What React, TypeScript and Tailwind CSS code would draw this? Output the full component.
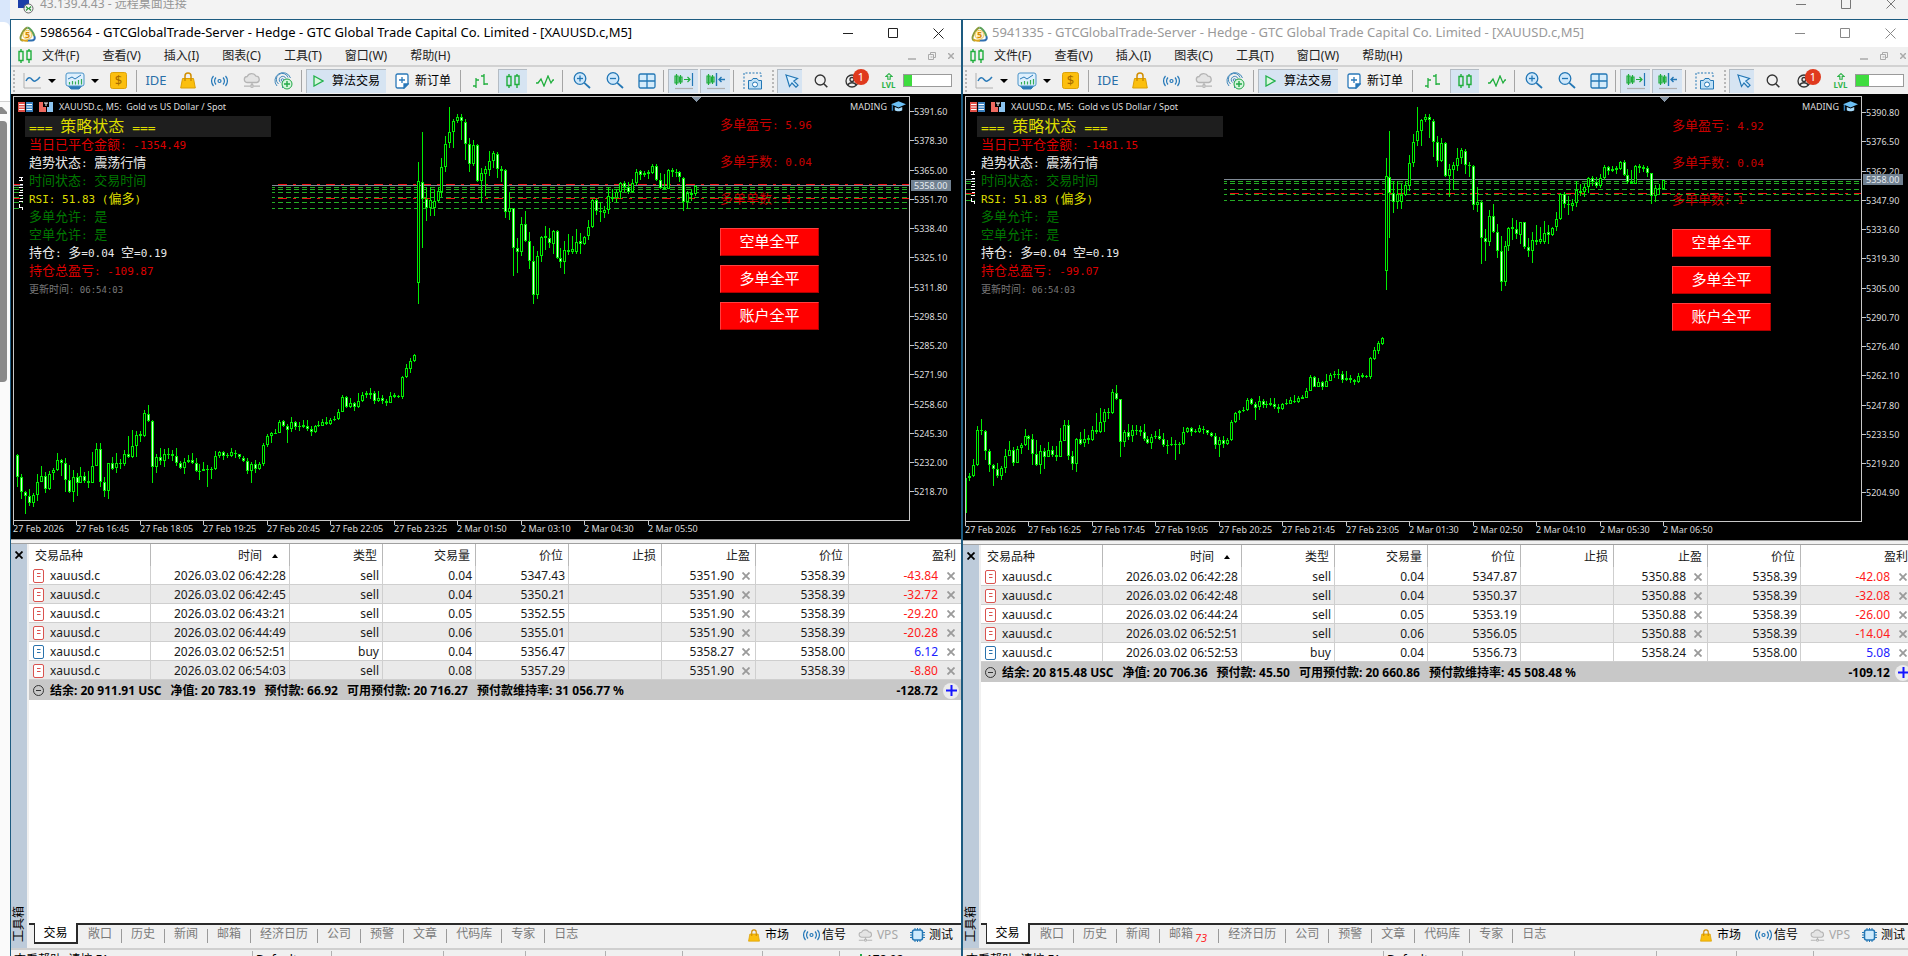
import React from 'react';

type Candle = [number, number, number, number, number];

// high, body top, body bottom, low, rising (1) or falling (0)
const friday: Candle[] = [
  [618, 618, 729, 729, 1], [600, 610, 618, 626, 1], [557, 575, 610, 613, 1], [450, 462, 575, 579, 1],
  [427, 462, 466, 479, 1], [463, 465, 530, 560, 0], [522, 530, 575, 598, 0], [573, 575, 587, 643, 0],
  [568, 587, 610, 618, 0], [578, 585, 610, 622, 1], [523, 545, 585, 602, 1], [497, 527, 545, 545, 1],
  [517, 527, 568, 578, 0], [513, 522, 568, 570, 1], [505, 510, 520, 540, 1], [458, 480, 510, 513, 1],
  [477, 480, 490, 527, 0], [475, 490, 541, 575, 0], [495, 541, 575, 578, 0], [510, 530, 575, 605, 1],
  [520, 530, 548, 588, 0], [502, 528, 548, 550, 1], [515, 528, 543, 548, 0], [513, 543, 548, 563, 0],
  [455, 497, 548, 550, 1], [430, 447, 497, 497, 1], [430, 447, 545, 560, 0], [530, 545, 572, 590, 0],
  [488, 490, 572, 597, 1], [470, 490, 507, 510, 0], [458, 490, 505, 518, 1], [477, 489, 493, 508, 1],
  [450, 462, 493, 498, 1], [408, 462, 470, 475, 0], [390, 437, 470, 473, 1], [393, 405, 437, 470, 1],
  [392, 403, 408, 425, 1], [330, 340, 407, 410, 1], [316, 343, 363, 365, 0], [361, 363, 500, 550, 0],
  [463, 470, 500, 518, 1], [443, 470, 483, 495, 0], [447, 462, 482, 500, 1], [445, 462, 465, 478, 1],
  [450, 462, 468, 482, 0], [443, 468, 490, 497, 0], [482, 490, 505, 508, 0], [475, 485, 505, 523, 1],
  [465, 480, 486, 490, 1], [458, 480, 490, 493, 0], [473, 490, 512, 517, 0], [493, 512, 515, 540, 0],
  [485, 508, 512, 513, 1], [495, 508, 510, 560, 0], [500, 508, 510, 538, 1], [453, 467, 508, 510, 1],
  [453, 457, 467, 473, 1], [453, 457, 467, 480, 0], [460, 465, 467, 473, 1], [445, 457, 467, 472, 1],
  [450, 460, 463, 475, 0], [461, 463, 472, 477, 0], [468, 473, 482, 485, 0], [473, 482, 512, 522, 0],
  [485, 493, 512, 548, 1], [480, 493, 508, 520, 0], [487, 493, 508, 510, 1], [430, 435, 493, 497, 1],
  [403, 407, 435, 440, 1], [397, 400, 407, 430, 1], [388, 398, 401, 403, 1], [360, 365, 398, 400, 1],
  [360, 363, 377, 380, 0], [373, 377, 390, 430, 0], [352, 367, 388, 397, 1], [363, 367, 380, 390, 0],
  [367, 378, 382, 392, 0], [360, 375, 380, 383, 1], [360, 377, 388, 393, 0], [378, 388, 395, 407, 0],
  [375, 378, 395, 398, 1], [363, 375, 378, 380, 1], [357, 365, 377, 378, 1], [350, 367, 373, 375, 0],
  [353, 360, 373, 375, 1], [348, 357, 361, 363, 1], [328, 335, 358, 360, 1], [286, 292, 335, 337, 1],
  [288, 292, 322, 323, 0], [295, 308, 322, 323, 1], [305, 308, 322, 333, 0], [280, 303, 322, 323, 1],
  [277, 285, 303, 305, 1], [273, 280, 285, 293, 1], [265, 280, 285, 298, 1], [273, 280, 302, 312, 0],
  [273, 295, 302, 305, 1], [285, 295, 302, 312, 0], [298, 302, 308, 318, 0], [277, 288, 308, 310, 1],
  [278, 286, 290, 293, 1], [285, 287, 291, 295, 0], [228, 230, 290, 298, 1], [193, 205, 232, 235, 1],
  [175, 182, 208, 218, 1], [162, 165, 183, 187, 1],
];

const monday: Candle[] = [
  [485, 543, 848, 912, 1], [397, 547, 598, 743, 0], [560, 598, 625, 663, 0], [560, 600, 625, 648, 1],
  [570, 603, 625, 648, 1], [560, 572, 603, 607, 1], [475, 500, 575, 590, 1], [408, 432, 500, 515, 1],
  [320, 397, 430, 445, 1], [358, 362, 397, 445, 1], [343, 352, 362, 370, 1], [343, 352, 362, 420, 0],
  [358, 365, 433, 480, 0], [415, 433, 493, 515, 0], [420, 435, 493, 497, 1], [433, 435, 543, 545, 0],
  [505, 520, 543, 610, 1], [498, 508, 522, 587, 1], [453, 483, 510, 527, 1], [452, 460, 483, 505, 1],
  [457, 462, 507, 535, 0], [497, 507, 512, 547, 0], [507, 510, 635, 653, 0], [577, 625, 635, 660, 1],
  [623, 625, 743, 827, 0], [713, 743, 757, 818, 0], [652, 672, 757, 767, 1], [632, 672, 722, 727, 0],
  [697, 722, 783, 808, 0], [737, 783, 885, 913, 0], [753, 767, 885, 897, 1], [707, 710, 767, 785, 1],
  [678, 707, 715, 750, 0], [683, 713, 730, 745, 0], [690, 692, 732, 763, 1], [690, 692, 773, 777, 0],
  [743, 773, 785, 803, 0], [723, 750, 785, 823, 1], [702, 750, 757, 765, 0], [707, 747, 755, 762, 1],
  [687, 725, 757, 762, 1], [700, 722, 732, 763, 0], [708, 710, 732, 735, 1], [660, 682, 708, 720, 1],
  [597, 600, 682, 685, 1], [593, 600, 632, 645, 0], [607, 632, 637, 667, 0], [617, 630, 640, 655, 1],
  [560, 587, 630, 643, 1], [567, 590, 597, 607, 0], [567, 577, 595, 610, 1], [547, 550, 577, 597, 1],
  [543, 550, 562, 575, 0], [547, 562, 575, 582, 0], [537, 550, 575, 580, 1], [508, 515, 550, 555, 1],
  [510, 513, 525, 540, 0], [512, 520, 525, 530, 1], [510, 517, 522, 537, 1], [493, 497, 520, 523, 1],
  [492, 497, 540, 543, 0], [520, 540, 563, 567, 0], [523, 563, 568, 570, 0], [507, 510, 567, 568, 1],
  [503, 510, 517, 532, 0], [507, 515, 520, 530, 0], [512, 517, 532, 545, 0], [532, 533, 607, 633, 0],
  [573, 580, 607, 627, 1], [567, 580, 585, 603, 0], [556, 557, 583, 588, 1],
];

// both sessions on one vertical axis, in chart pixels below the plot's top
const candles = [
  ...friday.map(([h, t, b, l, up]) => ({ h: h + 900, t: t + 900, b: b + 900, l: l + 900, up })),
  ...monday.map(([h, t, b, l, up]) => ({ h, t, b, l, up })),
].map((c) => ({ h: c.h / 3 - 97, t: c.t / 3 - 97, b: c.b / 3 - 97, l: c.l / 3 - 97, up: c.up === 1 }));

interface Terminal {
  account: string;
  active: boolean;
  skip: number;
  zoom: number;
  chartHeight: string;
  marker: number;
  bid: number;
  green: number[];
  red: number[];
  firstPrice: number;
  firstY: number;
  step: number;
  times: string[];
  closed: string;
  floating: string;
  longProfit: string;
  rows: string[][];
  summary: string[];
  total: string;
  mail: string;
  progress: string;
  statusCols: string[];
}

const terminals: Terminal[] = [
  {
    account: '5986564',
    active: true,
    skip: 5,
    zoom: 1,
    chartHeight: 'h-[445px]',
    marker: 682,
    bid: 88,
    green: [90, 92, 95, 100, 105, 111],
    red: [87, 101],
    firstPrice: 5391.6,
    firstY: 17,
    step: 13.3,
    times: ['27 Feb 2026', '27 Feb 16:45', '27 Feb 18:05', '27 Feb 19:25', '27 Feb 20:45', '27 Feb 22:05', '27 Feb 23:25', '2 Mar 01:50', '2 Mar 03:10', '2 Mar 04:30', '2 Mar 05:50'],
    closed: '-1354.49',
    floating: '-109.87',
    longProfit: '5.96',
    rows: [
      ['2026.03.02 06:42:28', 'sell', '0.04', '5347.43', '5351.90', '5358.39', '-43.84'],
      ['2026.03.02 06:42:45', 'sell', '0.04', '5350.21', '5351.90', '5358.39', '-32.72'],
      ['2026.03.02 06:43:21', 'sell', '0.05', '5352.55', '5351.90', '5358.39', '-29.20'],
      ['2026.03.02 06:44:49', 'sell', '0.06', '5355.01', '5351.90', '5358.39', '-20.28'],
      ['2026.03.02 06:52:51', 'buy', '0.04', '5356.47', '5358.27', '5358.00', '6.12'],
      ['2026.03.02 06:54:03', 'sell', '0.08', '5357.29', '5351.90', '5358.39', '-8.80'],
    ],
    summary: ['结余: 20 911.91 USC', '净值: 20 783.19', '预付款: 66.92', '可用预付款: 20 716.27', '预付款维持率: 31 056.77 %'],
    total: '-128.72',
    mail: '',
    progress: 'w-[18%]',
    statusCols: ['w-[242px]', 'w-[79px]', 'w-[112px]', 'w-[82px]', 'w-[80px]', 'w-[77px]', 'w-[80px]', 'w-[77px]'],
  },
  {
    account: '5941335',
    active: false,
    skip: 0,
    zoom: 0.93,
    chartHeight: 'h-[446px]',
    marker: 698,
    bid: 82,
    green: [84, 86, 92, 97, 103],
    red: [96],
    firstPrice: 5390.8,
    firstY: 18,
    step: 14.3,
    times: ['27 Feb 2026', '27 Feb 16:25', '27 Feb 17:45', '27 Feb 19:05', '27 Feb 20:25', '27 Feb 21:45', '27 Feb 23:05', '2 Mar 01:30', '2 Mar 02:50', '2 Mar 04:10', '2 Mar 05:30', '2 Mar 06:50'],
    closed: '-1481.15',
    floating: '-99.07',
    longProfit: '4.92',
    rows: [
      ['2026.03.02 06:42:28', 'sell', '0.04', '5347.87', '5350.88', '5358.39', '-42.08'],
      ['2026.03.02 06:42:48', 'sell', '0.04', '5350.37', '5350.88', '5358.39', '-32.08'],
      ['2026.03.02 06:44:24', 'sell', '0.05', '5353.19', '5350.88', '5358.39', '-26.00'],
      ['2026.03.02 06:52:51', 'sell', '0.06', '5356.05', '5350.88', '5358.39', '-14.04'],
      ['2026.03.02 06:52:53', 'buy', '0.04', '5356.73', '5358.24', '5358.00', '5.08'],
    ],
    summary: ['结余: 20 815.48 USC', '净值: 20 706.36', '预付款: 45.50', '可用预付款: 20 660.86', '预付款维持率: 45 508.48 %'],
    total: '-109.12',
    mail: '73',
    progress: 'w-[28%]',
    statusCols: ['w-[421px]', 'w-[79px]', 'w-[112px]', 'w-[82px]', 'w-[80px]', 'w-[77px]'],
  },
];

const menus = ['文件(F)', '查看(V)', '插入(I)', '图表(C)', '工具(T)', '窗口(W)', '帮助(H)'];
const tabs = ['交易', '敞口', '历史', '新闻', '邮箱', '经济日历', '公司', '预警', '文章', '代码库', '专家', '日志'];

function Logo() {
  return (
    <svg width="17" height="16" viewBox="0 0 17 16" fill="none" strokeWidth="2">
      <path d="M8.5 1.5C6 2.5 3 7 1.7 10.5C1 13 2 14.5 4 14.5" stroke="#8a9a3a" />
      <path d="M8.5 1.5C11 2 14 6 15.3 10" stroke="#5aa05a" />
      <path d="M15.3 10C16.5 13 15 14.5 12.5 14.5H8" stroke="#2f6fb0" />
      <path d="M2.5 13.5C4 15 6 14.6 9 14.6" stroke="#d9a520" />
      <circle cx="8.5" cy="8.8" r="4.5" fill="#fff4cf" stroke="#e8c050" strokeWidth="1" />
      <text x="8.5" y="12.3" textAnchor="middle" fontSize="9" fontWeight="bold" fill="#d98a00">5</text>
    </svg>
  );
}

function CandlePair() {
  return (
    <svg width="14" height="16" viewBox="0 0 14 16" fill="none" stroke="#1fae3c" strokeWidth="1.4">
      <path d="M3 1v2.5M3 12.5V15M1 3.5h4v9H1zM11 1v2M11 11.5V15M9 3h4v8.5H9z" />
    </svg>
  );
}

function Signal() {
  return (
    <svg width="17" height="12" viewBox="0 0 17 12" fill="none" stroke="#2277b8" strokeWidth="1.2">
      <circle cx="8.5" cy="6" r="1.5" />
      <path d="M5 2.5a5 5 0 0 0 0 7M12 2.5a5 5 0 0 1 0 7M2.5 1a7.500 7.500 0 0 0 0 10M14.500 1a7.500 7.500 0 0 1 0 10" />
    </svg>
  );
}

function Bag({ small }: { small?: boolean }) {
  return (
    <svg width={small ? 12 : 16} height={small ? 13 : 17} viewBox="0 0 16 17" fill="none">
      <path d="M2.5 6.5h11L15.3 16H.7z" fill="#fbbf0e" stroke="#dba007" />
      <path d="M5 9V4a3 3 0 0 1 6 0v5" stroke="#d08d00" strokeWidth="1.5" />
    </svg>
  );
}

function Cloud({ small }: { small?: boolean }) {
  return (
    <svg width={small ? 15 : 18} height={small ? 13 : 15} viewBox="0 0 18 15" fill="none" stroke="#b5b5b5" strokeWidth="1.3">
      <path d="M4.5 9.5a3 3 0 0 1-.3-6A5 5 0 0 1 13 3.2a3.2 3.2 0 0 1 .8 6.3z" fill="#e4e4e4" />
      <path d="M9 9.5v3M1 13.2h6M11 13.2h6" />
      <circle cx="9" cy="13" r="1.3" />
    </svg>
  );
}

function Magnifier({ plus }: { plus: boolean }) {
  return (
    <svg width="18" height="17" viewBox="0 0 18 17" fill="none" stroke="#2377b5" strokeWidth="1.3">
      <circle cx="7" cy="6.5" r="5.8" fill="#cfe8fb" />
      <path d="M4 6.5h6" />
      {plus && <path d="M7 3.5v6" />}
      <path d="M11.3 10.8L17 16" strokeWidth="1.8" />
    </svg>
  );
}

function Caret() {
  return (
    <svg width="8" height="4" viewBox="0 0 8 4">
      <path d="M0 0h8L4 4z" fill="#000" />
    </svg>
  );
}

function Cross({ className }: { className: string }) {
  return (
    <svg width="8" height="8" viewBox="0 0 8 8" fill="none" stroke="currentColor" className={className}>
      <path d="M.5.5l7 7M7.5.5l-7 7" strokeWidth="1.8" />
    </svg>
  );
}

function Separator() {
  return <span className="mr-px h-[22px] w-px bg-[#a5a5a5]" />;
}

function Grip() {
  return <span className="h-[22px] border-l-2 border-dotted border-[#b8b8b8]" />;
}

interface ToolProps {
  label: string;
  className: string;
  pressed?: boolean;
  children: React.ReactNode;
}

function Tool({ label, className, pressed, children }: ToolProps) {
  return (
    <button
      type="button"
      aria-label={label}
      className={`flex h-6 shrink-0 items-center justify-center ${pressed ? 'border-l border-t border-[#b4bcc4] bg-[#d6e4f2]' : ''} ${className}`}
    >
      {children}
    </button>
  );
}

function Toolbar({ t }: { t: Terminal }) {
  return (
    <div className="flex h-[27px] items-center bg-[#f0f0f0] pl-0.5">
      <Grip />
      <Tool label="线形图" className="ml-[3px] w-[41px] gap-1.5">
        <svg width="20" height="18" viewBox="0 0 20 18" fill="none">
          <path d="M2 1v15h17" stroke="#b0b0b0" />
          <path d="M4 9c2-4 4-4 6-1.5s4 2.5 8-2.5" stroke="#2a7ab8" strokeWidth="1.5" />
        </svg>
        <Caret />
      </Tool>
      <Tool label="指标" className="ml-0.5 w-[41px] gap-1.5">
        <svg width="20" height="18" viewBox="0 0 20 18" fill="none">
          <path d="M3 13.5l3 3.5h8l3-3.5" fill="#2a7ab8" stroke="#2a7ab8" />
          <rect x="1" y="1" width="18" height="13" rx="2" fill="#dff0fd" stroke="#4a93c8" />
          <path d="M3 7l4-2 3 2 6-4" stroke="#2a7ab8" />
          <path d="M4.5 12.5V10M7.5 12.5V9M10.5 12.5v-3M13.5 12.5V8M16.5 12.5V7" stroke="#35ae56" strokeWidth="1.2" />
        </svg>
        <Caret />
      </Tool>
      <Tool label="报价" className="w-8">
        <svg width="17" height="17" viewBox="0 0 17 17">
          <rect x=".5" y=".5" width="16" height="16" rx="2" fill="#fcbf10" stroke="#dda208" />
          <text x="8.5" y="13" textAnchor="middle" fontSize="13" fill="#a86c00">$</text>
        </svg>
      </Tool>
      <span className="mr-px ml-0.5 h-[22px] w-px bg-[#a5a5a5]" />
      <Tool label="MetaEditor" className="w-9 text-[13px] text-[#2a6fa8]">IDE</Tool>
      <Tool label="市场" className="w-7"><Bag /></Tool>
      <Tool label="信号" className="w-[35px]"><Signal /></Tool>
      <Tool label="VPS" className="w-[29px]"><Cloud /></Tool>
      <Tool label="社区" className="w-[35px]">
        <svg width="19" height="18" viewBox="0 0 19 18" fill="none" stroke="#4389bb">
          <path d="M3 14A8 8 0 1 1 16.5 6" />
          <path d="M4.5 12A6 6 0 1 1 14 5.5" />
          <path d="M6.5 10.5A3.5 3.5 0 1 1 12 6.5" />
          <circle cx="8.5" cy="8" r="1.3" />
          <path d="M8.5 9v7" />
          <circle cx="13" cy="12" r="5" fill="#d5f5dc" stroke="#22a847" />
          <path d="M10 12h6M13 9v6" stroke="#22a847" strokeWidth="1.4" />
        </svg>
      </Tool>
      <Separator />
      <Tool label="算法交易" pressed className="ml-[3px] w-20 gap-2 text-xs">
        <svg width="11" height="12" viewBox="0 0 11 12" fill="#d8f8de" stroke="#22b14c" strokeWidth="1.3">
          <path d="M1 1l9 5-9 5z" />
        </svg>
        算法交易
      </Tool>
      <Tool label="新订单" className="w-[74px] gap-1.5 text-xs">
        <svg width="14" height="16" viewBox="0 0 14 16" fill="#fff" stroke="#2a78b8" strokeWidth="1.3">
          <path d="M2.5 1h9A1.5 1.5 0 0 1 13 2.5V11l-4 4H2.5A1.5 1.5 0 0 1 1 13.5v-11A1.5 1.5 0 0 1 2.5 1z" />
          <path d="M13 11H9v4z" fill="#2a78b8" />
          <path d="M7 4v6M4 7h6" />
        </svg>
        新订单
      </Tool>
      <Separator />
      <Tool label="柱形图" className="w-9">
        <svg width="17" height="16" viewBox="0 0 17 16" fill="none" stroke="#1fae3c" strokeWidth="1.3">
          <path d="M4 5v10M1 13h3M4 7h3M12 1v11M9 3h3M12 11h4" />
        </svg>
      </Tool>
      <Tool label="蜡烛图" pressed className="w-[29px]"><CandlePair /></Tool>
      <Tool label="折线" className="w-[35px]">
        <svg width="18" height="12" viewBox="0 0 18 12" fill="none" stroke="#1fae3c" strokeWidth="1.3">
          <path d="M0 8h2l3-4 3 7 4-10 3 7 2-3h1" />
        </svg>
      </Tool>
      <Separator />
      <Tool label="放大" className="w-[35px]"><Magnifier plus /></Tool>
      <Tool label="缩小" className="w-[31px]"><Magnifier plus={false} /></Tool>
      <Tool label="平铺" className="w-[33px]">
        <svg width="18" height="16" viewBox="0 0 18 16" fill="#d5ecfb" stroke="#2377b5" strokeWidth="1.3">
          <rect x="1" y="1" width="16" height="14" rx="1.5" />
          <path d="M9 1v14M1 8h16" />
        </svg>
      </Tool>
      <Separator />
      <Tool label="自动滚动" pressed className="ml-[3px] w-[30px]">
        <svg width="20" height="17" viewBox="0 0 20 17" fill="none" stroke="#1fae3c" strokeWidth="1.2">
          <path d="M2.5 1v11M1 3h3v7H1zM6.5 2v9M5.5 4H8v5H5.5zM10 6.5h6M13.5 4l2.5 2.5L13.5 9" />
          <path d="M18.5 0v13" stroke="#2377b5" />
          <path d="M1 15.5h18" stroke="#b0b0b0" />
        </svg>
      </Tool>
      <Tool label="图表平移" pressed className="ml-0.5 w-[30px]">
        <svg width="20" height="17" viewBox="0 0 20 17" fill="none" stroke="#1fae3c" strokeWidth="1.2">
          <path d="M2.5 1v11M1 3h3v7H1zM6.5 2v9M5.5 4H8v5H5.5z" />
          <path d="M10.5 0v13M19 6.5h-6M15.5 4L13 6.5 15.5 9" stroke="#2377b5" strokeWidth="1.4" />
          <path d="M1 15.5h18" stroke="#b0b0b0" />
        </svg>
      </Tool>
      <span className="ml-[3px] h-[22px] w-px bg-[#a5a5a5]" />
      <Tool label="截图" className="w-[38px]">
        <svg width="20" height="18" viewBox="0 0 20 18" fill="none" stroke="#2377b5">
          <path d="M1 17V1h17v5" strokeDasharray="2 1.5" />
          <path d="M5.5 8.5h3l1.500-2h4l1.500 2h3v8.500h-13z" fill="#bfe0f6" />
          <circle cx="12" cy="12.5" r="2.5" fill="#fff" />
        </svg>
      </Tool>
      <Grip />
      <Tool label="光标" pressed className="ml-[3px] w-[25px] pl-1">
        <svg width="14" height="14" viewBox="0 0 14 14" fill="#d9efff" stroke="#2377b5" strokeWidth="1.2">
          <path d="M1 1l11.5 3.5L8.8 7l4.2 4.2-2 2L7 9l-2.5 3.5z" />
        </svg>
      </Tool>
      <Tool label="搜索" className="ml-[3px] w-8">
        <svg width="14" height="14" viewBox="0 0 14 14" fill="none" stroke="#333" strokeWidth="1.3">
          <circle cx="6.2" cy="6" r="5" />
          <path d="M9.8 9.8l3.5 3.5" strokeWidth="1.6" />
        </svg>
      </Tool>
      <Tool label="用户" className="relative w-9">
        <svg width="14" height="14" viewBox="0 0 14 14" fill="none" stroke="#333" strokeWidth="1.3" className="mr-1.5">
          <circle cx="7" cy="7" r="6" />
          <circle cx="7" cy="5.5" r="2" />
          <path d="M3 11c1-3 7-3 8 0" />
        </svg>
        <span className="absolute top-0 right-1 h-4 w-4 rounded-full bg-[#e03a1e] text-[11px] leading-4 text-white">1</span>
      </Tool>
      <Tool label="级别" className="ml-0.5 w-[27px] flex-col text-[8px] font-bold text-[#2fb34a]">
        <svg width="8" height="7" viewBox="0 0 10 9" fill="none" stroke="#2fb34a" strokeWidth="1.5">
          <path d="M5 .8L9 4.500H6.500V8h-3V4.500H1z" />
        </svg>
        <span className="leading-[9px]">LVL</span>
      </Tool>
      <span className="ml-px h-[13px] w-[49px] border border-[#9a9a9a] bg-white">
        <span className={`block h-full bg-[#3fdc3f] ${t.progress}`} />
      </span>
    </div>
  );
}

// CJK glyphs and half-width glyphs take different sizes so that two of the latter fill one of the former
function Mixed({ text, cjk, latin }: { text: string; cjk: string; latin: string }) {
  return (
    <>
      {text.split(/([\u4e00-\u9fff]+)/).map((part, i) => (
        <span key={i} className={i % 2 === 1 ? cjk : `font-['DejaVu_Sans_Mono','Noto_Sans_CJK_SC',monospace] ${latin}`}>
          {part}
        </span>
      ))}
    </>
  );
}

function StatusPanel({ t }: { t: Terminal }) {
  const lines = [
    { text: `当日已平仓金额: ${t.closed}`, color: 'text-[#dc0000]' },
    { text: '趋势状态: 震荡行情', color: 'text-[#e8e8e8]' },
    { text: '时间状态: 交易时间', color: 'text-[#007800]' },
    { text: 'RSI: 51.83 (偏多)', color: 'text-[#dcdc00]' },
    { text: '多单允许: 是', color: 'text-[#007800]' },
    { text: '空单允许: 是', color: 'text-[#007800]' },
    { text: '持仓: 多=0.04 空=0.19', color: 'text-[#e8e8e8]' },
    { text: `持仓总盈亏: ${t.floating}`, color: 'text-[#dc0000]' },
  ];
  return (
    <div className="absolute top-[19px] left-[9px] w-[249px] bg-black pl-0.5">
      <h2 className="mr-px -mb-0.5 h-[21px] bg-[#1e1e1e] pl-1 leading-[21px] whitespace-pre text-[#dcdc00]">
        <Mixed text="=== 策略状态 ===" cjk="text-base leading-[21px]" latin="text-[13px]" />
      </h2>
      {lines.map((line) => (
        <p key={line.text} className={`h-[18px] pl-1 leading-[17px] whitespace-pre ${line.color}`}>
          <Mixed text={line.text} cjk="text-[13px]" latin="text-[11px]" />
        </p>
      ))}
      <p className="h-[18px] pl-1 leading-[17px] whitespace-pre text-[#787878]">
        <Mixed text="更新时间: 06:54:03" cjk="text-[10px]" latin="text-[9px]" />
      </p>
    </div>
  );
}

function Plot({ t }: { t: Terminal }) {
  const y = (v: number) => Math.round((v - 14) * t.zoom + 14);
  return (
    <svg width="100%" height="100%" className="absolute inset-0" shapeRendering="crispEdges">
      {t.green.map((v) => (
        <line key={v} x1="0" x2="100%" y1={v + 0.5} y2={v + 0.5} stroke="#25ac25" strokeDasharray="5 3" />
      ))}
      {t.red.map((v) => (
        <line key={v} x1="0" x2="100%" y1={v + 0.5} y2={v + 0.5} stroke="#f01010" strokeDasharray="9 6 3 6" />
      ))}
      <line x1="0" x2="100%" y1={t.bid + 0.5} y2={t.bid + 0.5} stroke="#808a96" />
      {candles.slice(t.skip).map((c, i) => {
        const x = Math.round((t.skip ? 3 : -1) + i * 3.967);
        const height = Math.max(1, y(c.b) - y(c.t));
        return (
          <g key={i}>
            <rect x={x} y={y(c.h)} width="1" height={Math.max(1, y(c.l) - y(c.h))} fill="#00ee00" />
            <rect x={x - 1} y={y(c.t)} width="3" height={height} fill="#00ee00" />
            {height > 2 && <rect x={x} y={y(c.t) + 1} width="1" height={height - 2} fill={c.up ? '#000' : '#d8ffd8'} />}
          </g>
        );
      })}
      <path d={`M${t.marker - 5} 0h10l-5 5z`} fill="#8493a3" />
      <path d={`M5 ${t.bid - 8}h5m-5 3h5m-3-3v3m-1 4h4m-5 3l5 1m-4 2h4m-5 2h5m-5 3h4m-3 3l4 1m-5 2h5m-5 3v3h3v2h2`} stroke="#fff" fill="none" />
    </svg>
  );
}

function Chart({ t }: { t: Terminal }) {
  const labels = Array.from({ length: 14 }, (_, i) => ({
    y: Math.round(t.firstY + i * 29.25),
    text: (t.firstPrice - i * t.step).toFixed(2),
  }));
  return (
    <div className={`flex shrink-0 flex-col bg-black pt-0.5 pl-0.5 ${t.chartHeight}`}>
      <div className="flex min-h-0 flex-1">
        <div className="relative flex-1 overflow-hidden border border-[#c8c8c8]">
          <div className="flex items-center justify-between pt-[3px] pr-[3px] pl-1 text-[9px] leading-[13px] text-[#dcdcdc]">
            <div className="flex items-center whitespace-pre">
              <svg width="15" height="10" viewBox="0 0 15 10">
                <path d="M0 0h7v10H0z" fill="#e05048" />
                <path d="M8 0h7v10H8z" fill="#3c82c0" />
                <path d="M1 2.5h5.5M1 5h5.5M1 7.5h5.5M8.5 2.5H14M8.5 5H14M8.5 7.5H14" stroke="#fff" />
              </svg>
              <svg width="14" height="10" viewBox="0 0 14 10" className="ml-1.5">
                <path d="M0 0h4v5h3v5H0z" fill="#ee6a60" />
                <path d="M14 0h-4v5H8v5h6z" fill="#8cc4f0" />
                <path d="M5 1h4M7 1v3" stroke="#fff" />
              </svg>
              <span className="ml-1.5">XAUUSD.c, M5:  Gold vs US Dollar / Spot</span>
            </div>
            <div className="flex items-center gap-1">
              MADING
              <svg width="15" height="11" viewBox="0 0 16 11">
                <path d="M8 0l8 3-8 3.5L0 3z" fill="#6cc0f5" />
                <path d="M4 6v3.5c2 1.5 6 1.5 8 0V6L8 7.5z" fill="#a5dafa" />
                <path d="M1.5 4v6" stroke="#2a7ab8" strokeWidth="1.5" />
              </svg>
            </div>
          </div>
          <div className={`absolute right-[90px] flex w-[99px] flex-col text-[#c80000] ${t.active ? 'top-[17px]' : 'top-[18px]'}`}>
            {[`多单盈亏: ${t.longProfit}`, '多单手数: 0.04', '多单单数: 1'].map((line) => (
              <p key={line} className="mb-[18px] h-[19px] leading-[19px] whitespace-pre">
                <Mixed text={line} cjk="text-[13px]" latin="text-[11px]" />
              </p>
            ))}
          </div>
          <Plot t={t} />
          <StatusPanel t={t} />
          <div className={`absolute right-[90px] flex w-[99px] flex-col gap-[9px] ${t.active ? 'top-[131px]' : 'top-[132px]'}`}>
            {['空单全平', '多单全平', '账户全平'].map((name) => (
              <button key={name} type="button" className="h-7 border border-t-[#ff4040] border-r-[#b00000] border-b-[#b00000] border-l-[#ff4040] bg-[#ff0000] pb-0.5 text-[15px] leading-[22px] text-white">
                {name}
              </button>
            ))}
          </div>
        </div>
        <svg width="51" className="h-full shrink-0" fontSize="9" fill="#dcdcdc">
          {labels.map((label) => (
            <g key={label.text}>
              <path d={`M0 ${label.y - 1.5}h4`} stroke="#c8c8c8" />
              <text x="4" y={label.y + 2}>{label.text}</text>
            </g>
          ))}
          <rect x="1" y={t.bid - 4} width="40" height="11" fill="#708090" />
          <text x="4" y={t.bid + 5} fill="#e8edf2">5358.00</text>
        </svg>
      </div>
      <svg width="100%" height="18" fontSize="9" fill="#dcdcdc">
        {t.times.map((time, i) => (
          <g key={time}>
            <path d={`M${Math.round(i * 63.45) + 0.5} 0v4`} stroke="#c8c8c8" />
            <text x={Math.round(i * 63.45)} y="11">{time}</text>
          </g>
        ))}
      </svg>
    </div>
  );
}

function OrderIcon({ sell }: { sell: boolean }) {
  return (
    <svg width="11" height="14" viewBox="0 0 11 14" fill="#fff" stroke={sell ? '#d9534f' : '#2a72ac'} className="shrink-0">
      <rect x=".5" y=".5" width="10" height="13" rx="1.5" />
      <path d="M4 4.5h3.5M4 7.5h3.5" />
    </svg>
  );
}

function Positions({ t }: { t: Terminal }) {
  const cell = 'border-r border-[#cfcfcf] pt-px pr-[3px] text-right';
  const head = 'h-[22px] border-r border-[#b8b8b8] pr-[5px] text-right font-normal last:border-r-0';
  return (
    <table className="w-full table-fixed border-separate border-spacing-0 text-xs leading-[17px] text-[#1a1a1a]">
      <colgroup>
        <col className="w-[122px]" />
        <col className="w-[139px]" />
        <col className="w-[93px]" />
        <col className="w-[93px]" />
        <col className="w-[93px]" />
        <col className="w-[93px]" />
        <col className="w-[94px]" />
        <col className="w-[93px]" />
        <col />
      </colgroup>
      <thead>
        <tr>
          <th className="h-[22px] border-r border-[#b8b8b8] pl-1.5 text-left font-normal">交易品种</th>
          <th className={head}>
            时间
            <svg width="6" height="4" viewBox="0 0 6 4" className="mr-1.5 ml-2.5 inline-block">
              <path d="M0 4h6L3 0z" />
            </svg>
          </th>
          <th className={head}>类型</th>
          <th className={head}>交易量</th>
          <th className={head}>价位</th>
          <th className={head}>止损</th>
          <th className={head}>止盈</th>
          <th className={head}>价位</th>
          <th className={head}>盈利</th>
        </tr>
      </thead>
      <tbody>
        {t.rows.map(([time, side, volume, open, target, price, profit], i) => (
          <tr key={time} className={`h-[19px] *:border-b *:border-[#cfcfcf] ${i % 2 ? 'bg-[#eaeaea]' : 'bg-white'}`}>
            <td className="border-r pt-px pl-1">
              <div className="flex items-center gap-1.5">
                <OrderIcon sell={side === 'sell'} />
                xauusd.c
              </div>
            </td>
            <td className={cell}>{time}</td>
            <td className={cell}>{side}</td>
            <td className={cell}>{volume}</td>
            <td className={cell}>{open}</td>
            <td className={cell} />
            <td className={cell}>
              <div className="flex items-center justify-end">
                {target}
                <button type="button" aria-label="取消止盈" className="mr-0.5 ml-2"><Cross className="text-[#9a9a9a]" /></button>
              </div>
            </td>
            <td className={cell}>{price}</td>
            <td className="pt-px pr-1.5">
              <div className={`flex items-center justify-end ${profit.startsWith('-') ? 'text-[#ff1a1a]' : 'text-[#2020ff]'}`}>
                {profit}
                <button type="button" aria-label="平仓" className="ml-[9px]"><Cross className="text-[#9a9a9a]" /></button>
              </div>
            </td>
          </tr>
        ))}
        <tr className="h-5 bg-[#c8c8c8] font-bold text-black">
          <td colSpan={8} className="pt-px pl-1">
            <div className="flex items-center gap-[9px] whitespace-nowrap">
              <svg width="11" height="11" viewBox="0 0 11 11" fill="none" stroke="#333" className="-mr-[3px]">
                <circle cx="5.5" cy="5.5" r="5" />
                <path d="M3 5.5h5" />
              </svg>
              {t.summary.map((item) => (
                <span key={item}>{item}</span>
              ))}
            </div>
          </td>
          <td className="pt-px pr-0.5">
            <div className="flex items-center justify-end gap-[5px]">
              {t.total}
              <button type="button" aria-label="添加" className="flex size-4 items-center justify-center rounded-full bg-[#ececec]">
                <svg width="11" height="11" viewBox="0 0 11 11" stroke="#1414ff" strokeWidth="2">
                  <path d="M5.5 0v11M0 5.5h11" />
                </svg>
              </button>
            </div>
          </td>
        </tr>
      </tbody>
    </table>
  );
}

function TabBar({ t }: { t: Terminal }) {
  return (
    <div className="flex h-[25px] items-start justify-between border-t-2 border-[#2a2a2a] bg-[#f0f0f0] text-xs text-[#7a7a7a]">
      <div className="-mt-0.5 flex pl-[5px]">
        {tabs.map((tab, i) => (
          <button
            key={tab}
            type="button"
            className={
              i === 0
                ? 'h-[21px] w-11 border-r-2 border-b-2 border-l border-[#2a2a2a] bg-white text-black'
                : 'relative flex h-[21px] items-center pr-[9px] pl-2.5'
            }
          >
            {i > 1 && <span className="absolute top-1.5 left-0 h-3.5 w-px bg-[#9a9a9a]" />}
            {tab}
            {tab === '邮箱' && t.mail && <span className="mt-2 mr-0.5 pl-0.5 text-[11px] leading-3 text-[#ff2020] italic">{t.mail}</span>}
          </button>
        ))}
      </div>
      <div className="flex items-center pt-0.5 pr-2 text-black">
        <button type="button" className="mr-3.5 flex items-center gap-[5px]"><Bag small />市场</button>
        <button type="button" className="mr-3 flex items-center gap-0.5"><Signal />信号</button>
        <button type="button" className="mr-3 flex items-center gap-1 text-[#a8a8a8]"><Cloud small />VPS</button>
        <button type="button" className="flex items-center gap-1">
          <svg width="15" height="14" viewBox="0 0 15 14" fill="#cdeafd" stroke="#2377b5">
            <path d="M5 0v14M7.5 0v14M10 0v14M0 4.5h15M0 7h15M0 9.5h15" />
            <rect x="2.5" y="2" width="10" height="10" rx="2" strokeWidth="1.5" />
          </svg>
          测试
        </button>
      </div>
    </div>
  );
}

function StatusBar({ t }: { t: Terminal }) {
  const texts = ['查看帮助, 请按 F1', 'Default'];
  return (
    <div className="-mb-4 flex h-6 shrink-0 border-t-2 border-[#cfcfcf] bg-[#f0f0f0] text-xs leading-[17px] text-black">
      {t.statusCols.map((width, i) => (
        <span key={i} className={`mt-px shrink-0 border-r border-[#b0b0b0] pl-[3px] ${width}`}>{i < 2 ? texts[i] : ''}</span>
      ))}
      {t.active && (
        <span className="flex items-start gap-1 pt-px pl-4">
          <svg width="6" height="10" viewBox="0 0 6 10" stroke="#22a847" strokeWidth="2" className="mt-[3px]">
            <path d="M1 4v6M5 0v10" />
          </svg>
          178.02
        </span>
      )}
    </div>
  );
}

function Window({ t }: { t: Terminal }) {
  return (
    <section className="flex min-w-0 flex-1 flex-col border border-b-0 border-[#1d5b80] bg-[#f0f0f0]">
      <header className="flex h-[27px] shrink-0 items-center bg-white pl-2">
        <Logo />
        <h1 className={`ml-1 flex-1 pb-px text-[13px] whitespace-nowrap ${t.active ? 'text-black' : 'text-[#9a9a9a]'}`}>
          {t.account} - GTCGlobalTrade-Server - Hedge - GTC Global Trade Capital Co. Limited - [XAUUSD.c,M5]
        </h1>
        <div className={`mr-[17px] flex items-center gap-[35px] pb-px ${t.active ? 'text-[#222]' : 'text-[#888]'}`}>
          <button type="button" aria-label="最小化"><svg width="10" height="10" stroke="currentColor"><path d="M0 5.5h10" /></svg></button>
          <button type="button" aria-label="最大化"><svg width="10" height="10" stroke="currentColor" fill="none"><path d="M.5.5h9v9h-9z" /></svg></button>
          <button type="button" aria-label="关闭"><svg width="11" height="11" stroke="currentColor"><path d="M.5.5l10 10M10.5.5l-10 10" /></svg></button>
        </div>
      </header>
      <nav className="flex h-[18px] shrink-0 items-center pl-[7px] text-xs text-[#222]">
        <CandlePair />
        <div className="ml-2.5 flex flex-1 gap-[23px]">
          {menus.map((menu) => (
            <button key={menu} type="button" className="leading-[18px]">{menu}</button>
          ))}
        </div>
        <div className="mr-[7px] flex items-center gap-3 text-[#aaa]">
          <button type="button" aria-label="最小化图表"><svg width="8" height="7" stroke="currentColor" strokeWidth="1.5"><path d="M0 6h8" /></svg></button>
          <button type="button" aria-label="还原图表"><svg width="8" height="8" stroke="currentColor" fill="none"><path d="M.5 2.5h5v5h-5zM2.5 2V.5h5v5H6M2.5 5h2" /></svg></button>
          <button type="button" aria-label="关闭图表"><svg width="6" height="6" stroke="currentColor" strokeWidth="1.5"><path d="M0 0l6 6M6 0L0 6" /></svg></button>
        </div>
      </nav>
      <div className="shrink-0 border-t-2 border-[#d2d2d2]">
        <Toolbar t={t} />
      </div>
      <Chart t={t} />
      <div className="h-[5px] shrink-0 border-t border-b border-[#a0a0a0]" />
      <div className="flex min-h-0 flex-1">
        <aside className="flex w-4 shrink-0 flex-col items-center justify-between bg-[#bdcbda] pt-[7px] pb-4">
          <button type="button" aria-label="关闭工具箱"><Cross className="text-black" /></button>
          <span className="-rotate-90 text-xs leading-4 whitespace-nowrap">工具箱</span>
        </aside>
        <div className="ml-0.5 flex min-w-0 flex-1 flex-col bg-white">
          <div className="flex-1">
            <Positions t={t} />
          </div>
          <TabBar t={t} />
        </div>
      </div>
      <StatusBar t={t} />
    </section>
  );
}

export default function App() {
  return (
    <div className="flex h-screen overflow-hidden bg-[#f3f3f3] font-['Noto_Sans','Noto_Sans_CJK_SC',sans-serif]">
      <div className="w-2.5 shrink-0 bg-[#d9e7fb]">
        <div className="mt-[22px] h-20 rounded-tr-md border-b border-[#d0d0d0] bg-white" />
        <div className="h-full bg-[#fafafa] pt-[5px]">
          <svg width="7" height="7" viewBox="0 0 7 7" fill="#888">
            <path d="M0 0h2l5 5v2H0z" />
          </svg>
          <div className="mt-[7px] h-[261px] w-[7px] rounded-r bg-[#8a8a8a]" />
        </div>
      </div>
      <div className="flex min-w-0 flex-1 flex-col">
        <header className="-mt-3 flex h-[31px] shrink-0 items-center pl-2 text-xs text-[#969696]">
          <svg width="16" height="16" viewBox="0 0 16 16" className="mt-1">
            <rect x="0" y="0" width="11" height="10" fill="#1c3fa8" />
            <circle cx="10.5" cy="10.5" r="4.5" fill="#f4f4f4" stroke="#666" />
            <path d="M8 8.5l2 2-2 2M13 8.5l-2 2 2 2" stroke="#2a9a3a" fill="none" strokeWidth="1.3" />
          </svg>
          <span className="ml-1.5 flex-1">43.139.4.43 - 远程桌面连接</span>
          <div className="mr-3 flex items-center gap-[35px] text-[#777]">
            <button type="button" aria-label="最小化"><svg width="10" height="10" stroke="currentColor"><path d="M0 5.5h10" /></svg></button>
            <button type="button" aria-label="最大化"><svg width="10" height="10" stroke="currentColor" fill="none"><path d="M.5.5h9v9h-9z" /></svg></button>
            <button type="button" aria-label="关闭"><svg width="10" height="10" stroke="currentColor"><path d="M.5.5l9 9M9.5.5l-9 9" /></svg></button>
          </div>
        </header>
        <main className="-mr-1.5 flex min-h-0 flex-1">
          {terminals.map((t) => (
            <Window key={t.account} t={t} />
          ))}
        </main>
      </div>
    </div>
  );
}
